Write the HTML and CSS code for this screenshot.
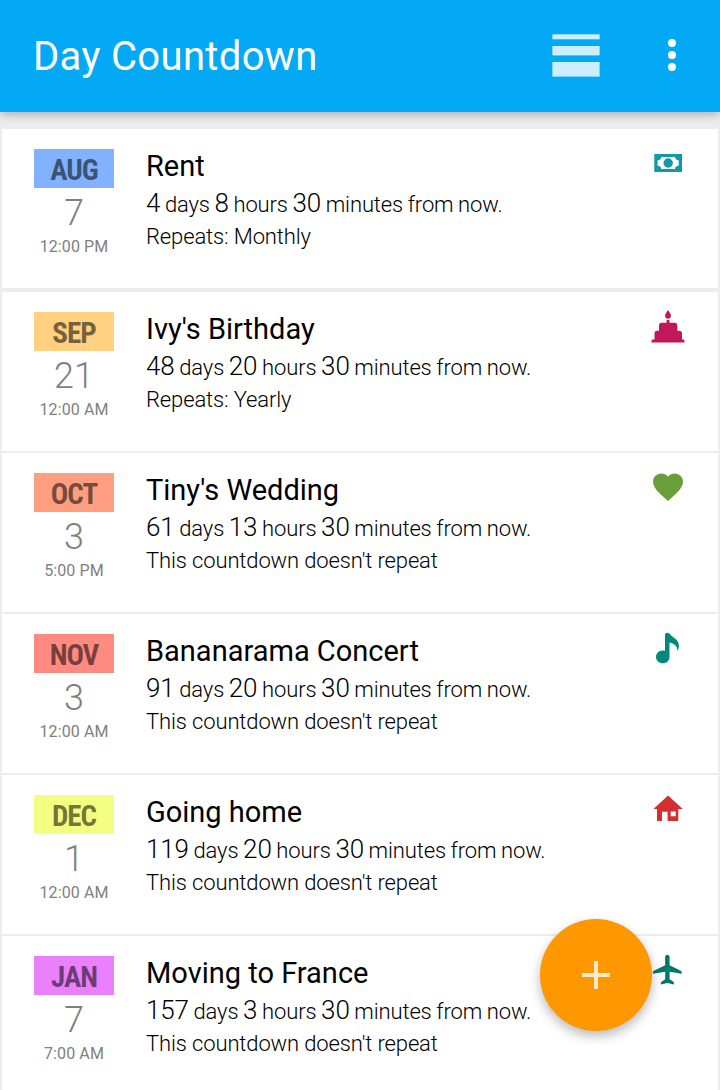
FILE: index.html
```html
<!DOCTYPE html>
<html lang="en">
<head>
    <meta charset="UTF-8">
    <meta name="viewport" content="width=device-width, initial-scale=1.0">
    <title>Day Countdown</title>
    <link rel="stylesheet" href="styles.css">
</head>
<body>
    <header class="toolbar">
        <h1 class="title">Day Countdown</h1>
        <button class="view-btn" aria-label="Change view">
            <svg width="48" height="43" viewBox="0 0 48 43" fill="#cdeefe">
                <rect x="0.4" y="0.3" width="47.2" height="5"/>
                <rect x="0.4" y="12" width="47.2" height="9.4"/>
                <rect x="0.4" y="28" width="47.2" height="14.6"/>
            </svg>
        </button>
        <button class="menu-btn" aria-label="More options">
            <svg width="8" height="32" viewBox="0 0 8 32" fill="#fff">
                <circle cx="4" cy="4" r="4"/>
                <circle cx="4" cy="16" r="4"/>
                <circle cx="4" cy="28" r="4"/>
            </svg>
        </button>
    </header>

    <main class="list">
        <article class="card first">
            <div class="date">
                <div class="month aug">AUG</div>
                <div class="day">7</div>
                <div class="time">12:00 PM</div>
            </div>
            <div class="info">
                <h2 class="name">Rent</h2>
                <p class="left"><b>4</b> days <b>8</b> hours <b>30</b> minutes from now.</p>
                <p class="repeat">Repeats: Monthly</p>
            </div>
            <svg class="icon" width="36" height="36" viewBox="0 0 36 36">
                <path fill="#1299a8" fill-rule="evenodd" d="M4.300 9H32v18H4.300zM11.300 12c0 1.700-1.500 3.200-3.700 3.200v5.600c2.200 0 3.700 1.500 3.700 3.200H25c0-1.700 1.500-3.200 3.700-3.200v-5.600c-2.200 0-3.700-1.500-3.700-3.200z"/>
                <circle cx="18.200" cy="18" r="4.700" fill="#1299a8"/>
            </svg>
        </article>

        <article class="card">
            <div class="date">
                <div class="month sep">SEP</div>
                <div class="day">21</div>
                <div class="time">12:00 AM</div>
            </div>
            <div class="info">
                <h2 class="name">Ivy's Birthday</h2>
                <p class="left"><b>48</b> days <b>20</b> hours <b>30</b> minutes from now.</p>
                <p class="repeat">Repeats: Yearly</p>
            </div>
            <svg class="icon" width="36" height="36" viewBox="0 0 36 36" fill="#c2185b">
                <path d="M18 2c1.300 2 2.900 3.900 2.900 5.800a2.900 2.900 0 0 1-5.800 0C15.100 5.900 16.700 4 18 2z"/>
                <path d="M16.600 12h2.900v2.700h5.300c1.600 0 2.500 1 2.500 2.500v5.500h2c1.700 0 2.700 1 2.700 2.700v6h1c1 0 1.500.6 1.500 1.500v1.500h-33v-1.500c0-.9.500-1.500 1.500-1.500h1.500v-6c0-1.700 1-2.700 2.500-2.700H9v-5.500c0-1.500.9-2.500 2.500-2.500h5.100z"/>
            </svg>
        </article>

        <article class="card">
            <div class="date">
                <div class="month oct">OCT</div>
                <div class="day">3</div>
                <div class="time">5:00 PM</div>
            </div>
            <div class="info">
                <h2 class="name">Tiny's Wedding</h2>
                <p class="left"><b>61</b> days <b>13</b> hours <b>30</b> minutes from now.</p>
                <p class="repeat">This countdown doesn't repeat</p>
            </div>
            <svg class="icon" width="36" height="36" viewBox="0 0 24 24" fill="#689f38">
                <path d="M12 21.350l-1.450-1.320C5.400 15.360 2 12.280 2 8.500 2 5.420 4.420 3 7.500 3c1.740 0 3.410.81 4.500 2.090C13.090 3.810 14.760 3 16.500 3 19.580 3 22 5.420 22 8.500c0 3.780-3.400 6.860-8.550 11.540z"/>
            </svg>
        </article>

        <article class="card">
            <div class="date">
                <div class="month nov">NOV</div>
                <div class="day">3</div>
                <div class="time">12:00 AM</div>
            </div>
            <div class="info">
                <h2 class="name">Bananarama Concert</h2>
                <p class="left"><b>91</b> days <b>20</b> hours <b>30</b> minutes from now.</p>
                <p class="repeat">This countdown doesn't repeat</p>
            </div>
            <svg class="icon" width="36" height="36" viewBox="0 0 36 36" fill="#00897b">
                <path d="M15 5c0-1.500.9-2.300 2.200-2.300 1.500 0 2.300.9 3.500 2.300 3 3.200 8.200 4.600 8.200 10.800 0 2-.4 3.700-1.400 5.200.1-4.300-2.700-7.200-8-8.500V27c0 3.700-3 6.300-6.700 6.300S6 30.600 6 27s3-6.500 6.700-6.500c.9 0 1.600.1 2.300.4z"/>
            </svg>
        </article>

        <article class="card">
            <div class="date">
                <div class="month dec">DEC</div>
                <div class="day">1</div>
                <div class="time">12:00 AM</div>
            </div>
            <div class="info">
                <h2 class="name">Going home</h2>
                <p class="left"><b>119</b> days <b>20</b> hours <b>30</b> minutes from now.</p>
                <p class="repeat">This countdown doesn't repeat</p>
            </div>
            <svg class="icon" width="36" height="36" viewBox="0 0 36 36" fill="#d32f2f">
                <path fill-rule="evenodd" d="M18.100 4.500L32.800 18H28.300v12H17.600v-9.300h-5.600V30H7V18H3.500zM20.700 20.500v4.700h5v-4.700z"/>
            </svg>
        </article>

        <article class="card">
            <div class="date">
                <div class="month jan">JAN</div>
                <div class="day">7</div>
                <div class="time">7:00 AM</div>
            </div>
            <div class="info">
                <h2 class="name">Moving to France</h2>
                <p class="left"><b>157</b> days <b>3</b> hours <b>30</b> minutes from now.</p>
                <p class="repeat">This countdown doesn't repeat</p>
            </div>
            <svg class="icon" width="36" height="36" viewBox="0 0 36 36" fill="#00796b">
                <path d="M15.100 5.500c0-3.600 4.500-3.600 4.500 0v7.700l11.100 5.600c.9.500 1.300 1.400 1.200 2.900l-12.300-2v7.500l3.500 2.200c.8.600 1 1.500 1 3.100l-6.700-1.500-6.600 1.500c0-1.600.2-2.500 1-3.100l3.400-2.200v-7.500l-12.400 2c-.1-1.500.3-2.400 1.200-2.900l11.100-5.600z"/>
            </svg>
        </article>
    </main>

    <button class="fab" aria-label="Add countdown">
        <svg width="28" height="28" viewBox="0 0 28 28" fill="#ffebcc">
            <path d="M12 0h4v12h12v4H16v12h-4V16H0v-4h12z"/>
        </svg>
    </button>
</body>
</html>
```
FILE: styles.css
```css
* {
    box-sizing: border-box;
    margin: 0;
    padding: 0;
}

body {
    height: 1090px;
    overflow: hidden;
    background-color: #ededed;
    font-family: Roboto, "Liberation Sans", sans-serif;
    color: #000;
}

button {
    border: none;
    background: none;
    cursor: pointer;
}

button svg {
    display: block;
}

/* top bar */
.toolbar {
    display: flex;
    align-items: center;
    height: 112px;
    padding: 0 44px 1px 33px;
    background-color: #03a9f4;
    border-bottom: 1px solid #3f96bd;
    box-shadow: 0 2px 10px rgba(0, 0, 0, 0.3);
}

.title {
    flex: 1;
    padding-top: 3px;
    font-size: 40px;
    font-weight: 400;
    letter-spacing: 0.35px;
    color: #fff;
}

.view-btn {
    margin-right: 68px;
}

/* countdown list */
.list {
    padding: 17px 2px 0;
}

.card {
    display: flex;
    height: 159px;
    margin-bottom: 2px;
    padding: 20px 32px 0;
    background-color: #fff;
}

.card.first {
    margin-bottom: 4px;
}

.date {
    width: 80px;
    margin-right: 32px;
    text-align: center;
    color: #808080;
}

.month {
    height: 39px;
    line-height: 42px;
    font-family: "Roboto Condensed", Roboto, sans-serif;
    font-size: 29px;
    font-weight: 700;
    font-stretch: 75%;
    letter-spacing: -1px;
    color: rgba(0, 0, 0, 0.54);
}

.aug { background-color: #82b1ff; }
.sep { background-color: #ffd180; }
.oct { background-color: #ff9e80; }
.nov { background-color: #ff8a80; }
.dec { background-color: #f4ff81; }
.jan { background-color: #ea80fc; }

.day {
    height: 49px;
    line-height: 50px;
    font-size: 36px;
    font-weight: 300;
}

.time {
    line-height: 20px;
    font-size: 16px;
    letter-spacing: 0.1px;
}

.info {
    flex: 1;
}

.name {
    height: 36px;
    line-height: 34px;
    font-size: 29px;
    font-weight: 400;
}

.left,
.repeat {
    height: 33px;
    line-height: 36px;
    font-size: 22px;
    font-weight: 300;
    letter-spacing: -0.13px;
    white-space: nowrap;
}

.left {
    height: 34px;
    word-spacing: -0.6px;
}

.left b {
    font-size: 26px;
    font-weight: 300;
}

.icon {
    margin-top: -4px;
}

/* floating add button */
.fab {
    position: absolute;
    left: 540px;
    top: 919px;
    display: flex;
    justify-content: center;
    align-items: center;
    width: 112px;
    height: 112px;
    border-radius: 50%;
    background-color: #ff9800;
    box-shadow: 0 5px 12px rgba(0, 0, 0, 0.28);
}
```
